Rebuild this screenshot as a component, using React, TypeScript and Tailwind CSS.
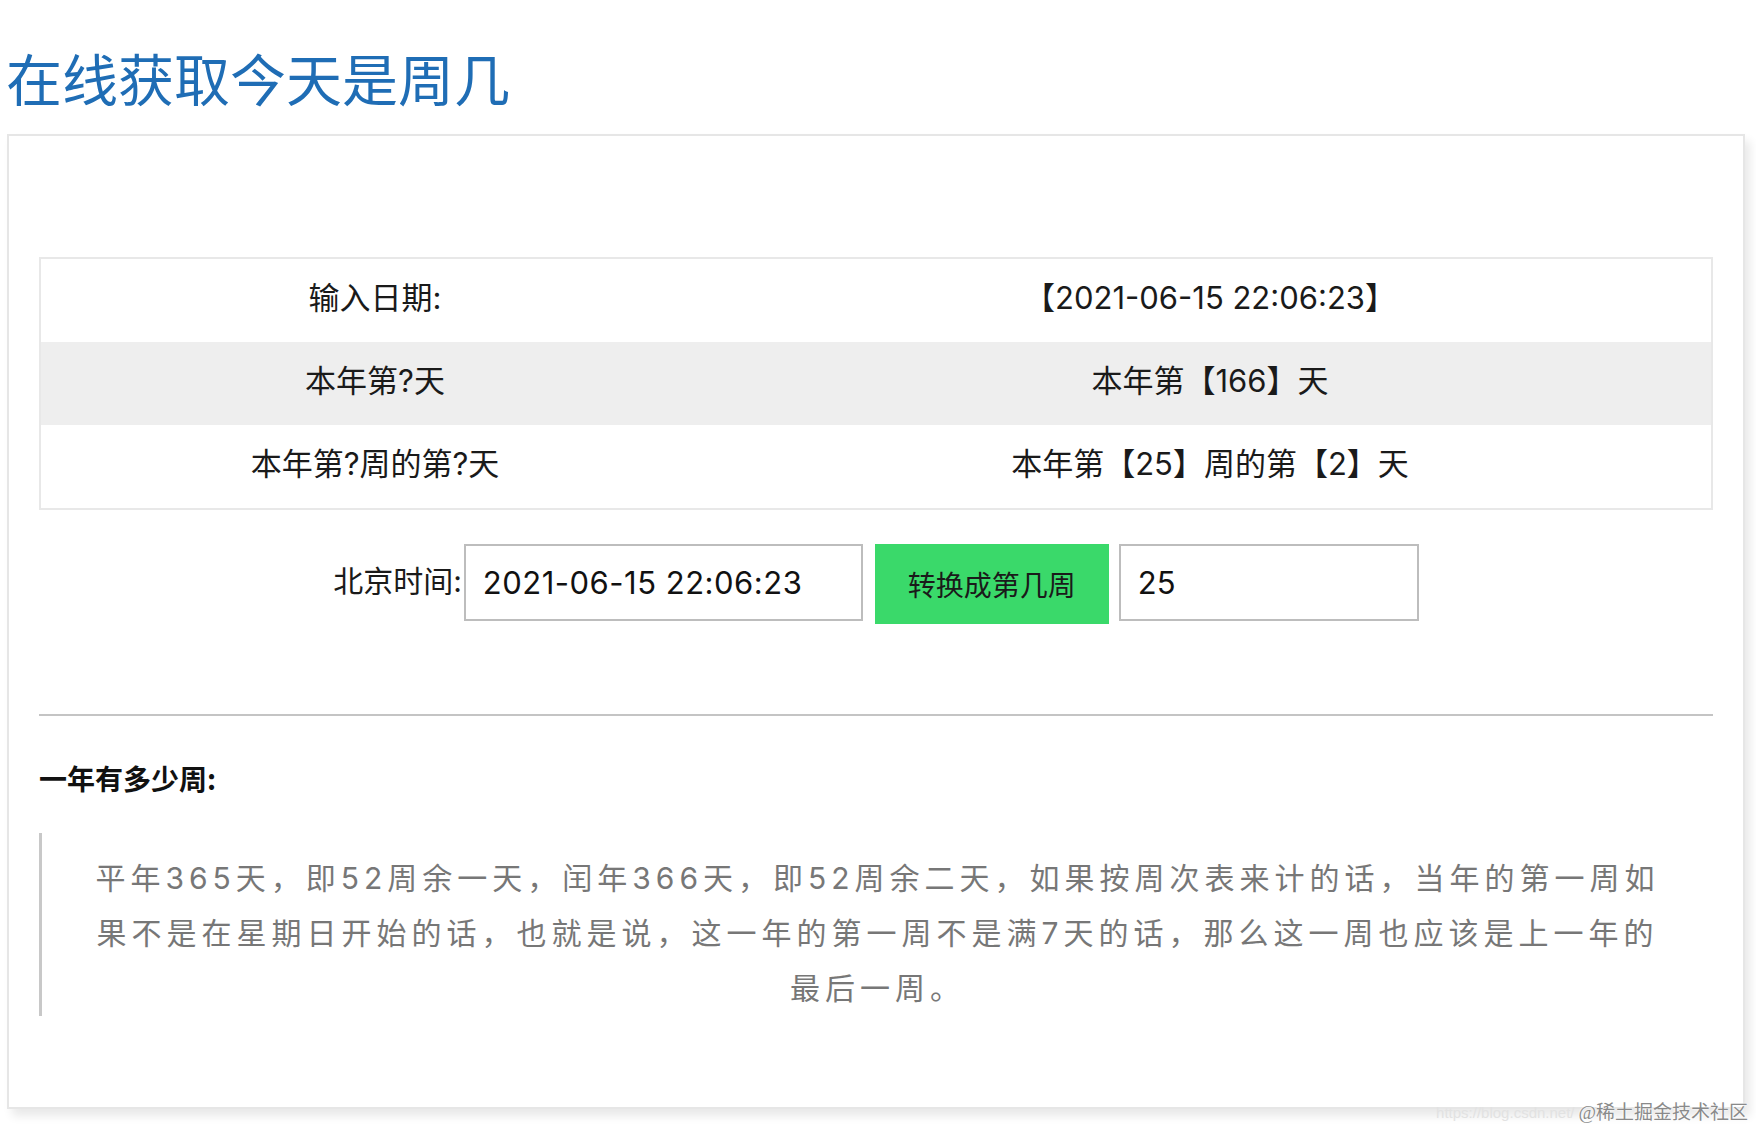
import React from "react";

const font = { fontFamily: '"Noto Sans CJK SC", "Noto Sans", sans-serif' };
const latin = { fontFamily: 'Inter, "Noto Sans CJK SC", sans-serif' };

export default function App() {
  return (
    <div
      className="relative w-[1756px] h-[1128px] bg-white overflow-hidden"
      style={font}
    >
      <div className="pt-[45px] pl-[6px]">
        <h1 className="text-[56px] leading-[64px] font-normal text-[#1f6db5]">
          在线获取今天是周几
        </h1>
      </div>

      <div className="mt-[25px] ml-[7px] mr-[11px] border-2 border-[#e6e6e6] bg-white shadow-[5px_7px_9px_rgba(0,0,0,0.09)] px-[30px] pt-[121px] pb-[91px]">
        <div
          className="border-2 border-[#e8e8e8] text-[31px] text-[#1a1a1a]"
          style={latin}
        >
          <div className="flex h-[83px] items-center pb-[4px]">
            <div className="w-[40%] text-center">输入日期:</div>
            <div className="w-[60%] text-center">【2021-06-15 22:06:23】</div>
          </div>
          <div className="flex h-[83px] items-center pb-[4px] bg-[#eeeeee]">
            <div className="w-[40%] text-center">本年第?天</div>
            <div className="w-[60%] text-center">本年第【166】天</div>
          </div>
          <div className="flex h-[83px] items-center pb-[4px]">
            <div className="w-[40%] text-center">本年第?周的第?天</div>
            <div className="w-[60%] text-center">本年第【25】周的第【2】天</div>
          </div>
        </div>

        <div
          className="mt-[34px] flex items-start justify-center text-[30px] text-[#1a1a1a]"
          style={latin}
        >
          <span className="self-center mr-[2px] leading-[40px] mt-[-6px]">北京时间:</span>
          <input
            readOnly
            value="2021-06-15 22:06:23"
            className="w-[399px] h-[77px] border-2 border-[#bdbdbd] pl-[17px] text-[31px] tracking-[0.5px] text-[#111] bg-white outline-none"
            style={latin}
          />
          <button
            className="ml-[12px] w-[234px] h-[80px] bg-[#3ad96a] text-[28px] text-[#1a1a1a]"
            style={font}
          >
            转换成第几周
          </button>
          <input
            readOnly
            value="25"
            className="ml-[10px] w-[300px] h-[77px] border-2 border-[#bdbdbd] pl-[17px] text-[31px] text-[#111] bg-white outline-none"
            style={latin}
          />
        </div>

        <div className="mt-[90px] border-t-2 border-[#c4c4c4]" />

        <div className="mt-[44px] text-[28px] leading-[36px] font-bold text-[#111]">
          一年有多少周:
        </div>

        <div
          className="mt-[37px] border-l-[3px] border-[#c8c8c8] pt-[18px] text-center text-[30px] leading-[55px] tracking-[5px] text-[#777777] whitespace-nowrap"
          style={latin}
        >
          平年365天，即52周余一天，闰年366天，即52周余二天，如果按周次表来计的话，当年的第一周如
          <br />
          果不是在星期日开始的话，也就是说，这一年的第一周不是满7天的话，那么这一周也应该是上一年的
          <br />
          最后一周。
        </div>
      </div>

      <div className="absolute right-[8px] top-[1099px] flex items-center whitespace-nowrap">
        <span
          className="text-[15px] text-[#e2e2e2] mr-[4px]"
          style={{ fontFamily: '"Liberation Sans", sans-serif' }}
        >
          https://blog.csdn.net/
        </span>
        <span
          className="relative text-[19px] text-[#8a8a8a] [text-shadow:0_0_2px_#fff,0_0_2px_#fff]"
          style={{ fontFamily: '"Liberation Serif", "Noto Sans CJK SC", serif' }}
        >
          @稀土掘金技术社区
        </span>
      </div>
    </div>
  );
}
